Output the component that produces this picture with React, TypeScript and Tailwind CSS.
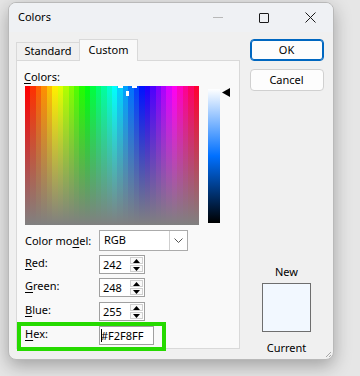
import React from 'react';

const FONT = { fontFamily: '"Noto Sans", "Open Sans", sans-serif' };

function Spectrum() {
  const w = 174;
  const h = 139;
  const n = 32;
  const cw = w / n;
  const cols = Array.from({ length: n }, (_, i) => i);
  return (
    <svg width={w} height={h} className="block" shapeRendering="crispEdges">
      <defs>
        <linearGradient id="sat" x1="0" y1="0" x2="0" y2="1">
          <stop offset="0" stopColor="#808080" stopOpacity="0" />
          <stop offset="1" stopColor="#808080" stopOpacity="1" />
        </linearGradient>
      </defs>
      {cols.map((i) => (
        <rect
          key={i}
          x={i * cw}
          y={0}
          width={cw + 0.6}
          height={h}
          fill={`hsl(${(i / (n - 1)) * 348}, 100%, 50%)`}
        />
      ))}
      <rect width={w} height={h} fill="url(#sat)" />
      {/* crosshair */}
      <rect x={93} y={0} width={5} height={2} fill="#fff" />
      <rect x={107} y={0} width={5} height={2} fill="#fff" />
      <rect x={101} y={5} width={3} height={5} fill="#fff" />
    </svg>
  );
}

function LumBar() {
  return (
    <svg width={12} height={134} className="block">
      <defs>
        <linearGradient id="lum" x1="0" y1="0" x2="0" y2="1">
          <stop offset="0" stopColor="#ffffff" />
          <stop offset="0.5" stopColor="#0070ff" />
          <stop offset="1" stopColor="#000000" />
        </linearGradient>
      </defs>
      <rect width={12} height={134} fill="url(#lum)" />
    </svg>
  );
}

function Arrow({ up }: { up?: boolean }) {
  return (
    <svg width={7} height={4} viewBox="0 0 7 4" className="block">
      <path d={up ? 'M3.5 0 L7 4 L0 4 Z' : 'M0 0 L7 0 L3.5 4 Z'} fill="#000" />
    </svg>
  );
}

function Spin({ value }: { value: string }) {
  return (
    <div className="flex h-[19px] w-[46px] items-center border border-[#a0a0a0] bg-white pl-[3px]">
      <span className="flex-1 text-[11px] leading-none text-black">{value}</span>
      <div className="mr-[1px] flex h-full w-[13px] flex-col justify-center gap-px py-px">
        <div className="flex flex-1 items-center justify-center border border-[#d0d0d0] bg-[#fafafa]">
          <Arrow up />
        </div>
        <div className="flex flex-1 items-center justify-center border border-[#d0d0d0] bg-[#fafafa]">
          <Arrow />
        </div>
      </div>
    </div>
  );
}

function Label({ pre, u, post }: { pre?: string; u: string; post: string }) {
  return (
    <span className="w-[74px] shrink-0 text-[11px] leading-[15px] text-black">
      {pre}
      <span className="underline underline-offset-2">{u}</span>
      {post}
    </span>
  );
}

export default function App() {
  return (
    <div
      className="h-[376px] w-[360px] overflow-hidden bg-[#e6e6e6] pl-[8px] pt-[2px]"
      style={FONT}
    >
      <div className="relative flex h-[358px] w-[326px] flex-col overflow-hidden rounded-lg border border-[#b9b9b9] bg-[#f0f0f0] shadow-[0_6px_18px_rgba(0,0,0,0.3)]">
        {/* title bar */}
        <div className="flex h-[29px] shrink-0 items-center bg-[#eff1f4]">
          <span className="flex-1 pl-[9px] text-[11px] text-black">Colors</span>
          <div className="flex h-full w-[46px] items-center justify-center">
            <div className="h-px w-[10px] bg-[#b8b8b8]" />
          </div>
          <div className="flex h-full w-[46px] items-center justify-center">
            <div className="h-[10px] w-[10px] rounded-[1px] border border-[#1a1a1a]" />
          </div>
          <div className="flex h-full w-[46px] items-center justify-center">
            <svg width={11} height={11} viewBox="0 0 11 11">
              <path d="M0.5 0.5 L10.5 10.5 M10.5 0.5 L0.5 10.5" stroke="#1a1a1a" strokeWidth={1} />
            </svg>
          </div>
        </div>

        {/* body */}
        <div className="flex flex-1">
          {/* left: tab control */}
          <div className="flex w-[231px] flex-col pl-[7px] pt-[7px]">
            <div className="flex h-[21px] items-end">
              <div className="flex h-[18px] w-[63px] items-center justify-center border-l border-t border-[#d9d9d9] bg-[#f0f0f0] text-[11px] text-black">
                Standard
              </div>
              <div className="relative z-10 -mb-px flex h-[22px] w-[59px] items-center justify-center border-x border-t border-[#d9d9d9] bg-[#f9f9f9] text-[11px] text-black">
                Custom
              </div>
            </div>
            <div className="flex h-[289px] flex-col border border-[#d9d9d9] bg-[#f9f9f9] pl-[7px] pt-[8px]">
              <span className="text-[11px] leading-[15px] text-black">
                <span className="underline underline-offset-2">C</span>olors:
              </span>
              <div className="mt-[2px] flex items-start pl-px">
                <Spectrum />
                <div className="ml-[9px] mt-[3px]">
                  <LumBar />
                </div>
                <svg width={8} height={9} viewBox="0 0 8 9" className="ml-[2px] mt-[2px] block">
                  <path d="M0 4.5 L8 0 L8 9 Z" fill="#000" />
                </svg>
              </div>

              <div className="mt-[5px] flex items-center pl-px">
                <Label pre="Color mo" u="d" post="el:" />
                <div className="flex h-[21px] w-[89px] border border-[#ababab] bg-white">
                  <span className="flex flex-1 items-center pl-[4px] text-[11px] text-black">RGB</span>
                  <div className="flex w-[18px] items-center justify-center border-l border-[#cfcfcf]">
                    <svg width={9} height={5} viewBox="0 0 9 5">
                      <path d="M0.5 0.5 L4.5 4.5 L8.5 0.5" stroke="#555" strokeWidth={1} fill="none" />
                    </svg>
                  </div>
                </div>
              </div>

              <div className="mt-[4px] flex items-start pl-px">
                <Label u="R" post="ed:" />
                <Spin value="242" />
              </div>
              <div className="mt-[4px] flex items-start pl-px">
                <Label u="G" post="reen:" />
                <Spin value="248" />
              </div>
              <div className="mt-[5px] flex items-start pl-px">
                <Label u="B" post="lue:" />
                <Spin value="255" />
              </div>
              <div className="mt-[5px] flex items-start pl-px">
                <Label u="H" post="ex:" />
                <div className="flex h-[19px] w-[55px] items-center border border-[#a0a0a0] bg-white pl-[1px]">
                  <span className="h-[13px] w-px bg-black" />
                  <span className="-ml-px text-[11px] leading-none text-black">#F2F8FF</span>
                </div>
              </div>
            </div>
          </div>

          {/* right column */}
          <div className="flex flex-1 flex-col items-center pb-[4px] pt-[7px]">
            <button className="h-[22px] w-[74px] rounded-[4px] border border-[#0067c0] bg-[#fdfdfd] text-[11px] text-black shadow-[inset_0_0_0_1px_#0067c0]">
              OK
            </button>
            <button className="mt-[8px] h-[22px] w-[74px] rounded-[4px] border border-[#d0d0d0] bg-[#fdfdfd] text-[11px] text-black">
              Cancel
            </button>
            <span className="mt-auto text-[11px] leading-[15px] text-black">New</span>
            <div className="mt-[4px] h-[49px] w-[49px] border border-[#6e6e6e] bg-[#f2f8ff]" />
            <span className="mt-[8px] text-[11px] leading-[15px] text-black">Current</span>
          </div>
        </div>

        {/* resize grip */}
        <svg width={8} height={8} viewBox="0 0 8 8" className="absolute bottom-px right-px">
          <path d="M7 2 L2 7 M7 5 L5 7" stroke="#a8a8a8" strokeWidth={1} />
        </svg>

        {/* highlight annotation */}
        <div className="absolute left-[8px] top-[319px] h-[29px] w-[149px] border-[4px] border-[#26da00]" />
      </div>
    </div>
  );
}
